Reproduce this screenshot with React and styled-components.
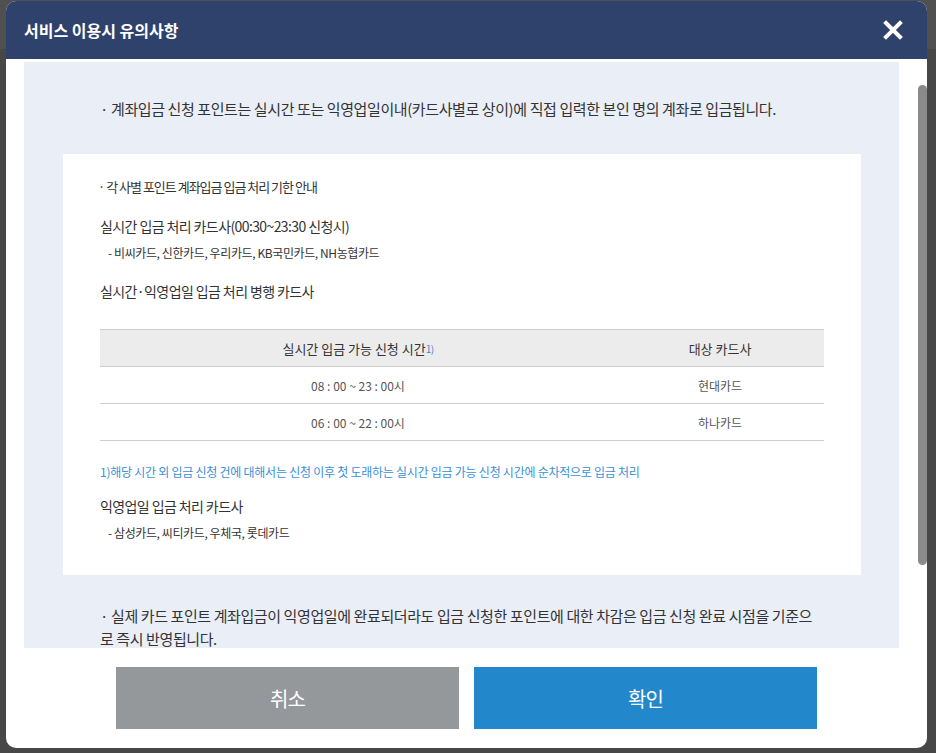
import React from 'react';
import styled, { createGlobalStyle } from 'styled-components';

const GlobalStyle = createGlobalStyle`
  html,
  body {
    margin: 0;
    padding: 0;
  }
  body {
    height: 753px;
    overflow: hidden;
    background: linear-gradient(#505050 0, #505050 49px, #474747 49px);
    font-family: 'Noto Sans CJK KR', 'Noto Sans', sans-serif;
    color: #333;
  }
`;

const StyledModal = styled.div`
  display: flex;
  flex-direction: column;
  width: 921px;
  height: 747px;
  margin: 1px 0 0 6px;
  border-radius: 10px;
  overflow: hidden;
  background: #fff;
`;

const StyledHeader = styled.header`
  display: flex;
  align-items: center;
  justify-content: space-between;
  flex-shrink: 0;
  height: 58px;
  padding: 0 24px 0 18px;
  background: #2e426b;

  h1 {
    margin: 0;
    color: #fff;
    font-size: 16px;
    font-weight: 700;
  }
`;

const StyledClose = styled.button`
  display: flex;
  padding: 0;
  border: 0;
  background: transparent;
  cursor: pointer;
`;

const StyledBody = styled.div`
  display: flex;
  gap: 19px;
  flex-shrink: 0;
  height: 586px;
  margin-top: 3px;
  padding-left: 18px;
`;

const StyledViewport = styled.div`
  width: 875px;
  height: 100%;
  overflow: hidden;
`;

const StyledTrack = styled.div`
  width: 9px;
  padding-top: 23px;
`;

const StyledThumb = styled.div`
  height: 480px;
  border-radius: 5px;
  background: #8a8a8a;
`;

const StyledContent = styled.div`
  padding: 35px 0 100px;
  background: #eaeef7;
`;

const StyledNotice = styled.p`
  margin: ${({ gap }) => gap || 0} 0 0;
  padding: 0 83px 0 76px;
  font-size: 15px;
  line-height: 23px;
  letter-spacing: -0.4px;
  word-break: break-all;
`;

const StyledBox = styled.div`
  margin: 34px 38px 0 39px;
  padding: 23px 37px 33px;
  background: #fff;
`;

const StyledBoxTitle = styled.p`
  margin: 0 0 0 -2px;
  font-size: 13px;
  line-height: 20px;
  letter-spacing: -1px;
`;

const StyledLabel = styled.p`
  margin: ${({ gap }) => gap}px 0 0;
  font-size: 14px;
  line-height: 20px;
  letter-spacing: -0.6px;
`;

const StyledSub = styled.p`
  margin: 8px 0 0;
  padding-left: 8px;
  font-size: 12px;
  line-height: 18px;
  letter-spacing: -0.4px;
`;

const StyledTable = styled.table`
  width: 100%;
  margin-top: 28px;
  border-collapse: collapse;
  border-top: 1px solid #cdcdcd;

  th,
  td {
    height: 36px;
    padding: 0;
    border-bottom: 1px solid #cdcdcd;
    text-align: center;
    vertical-align: middle;
  }
  th {
    background: #ececec;
    color: #333;
    font-size: 13px;
    font-weight: 400;
  }
  td {
    color: #555;
    font-size: 12px;
  }
  th:first-child {
    width: 516px;
  }

  sup {
    color: #4a84d0;
    font-size: 10px;
    vertical-align: 1px;
    letter-spacing: -0.5px;
  }
`;

const StyledFootnote = styled.p`
  margin: 22px 0 0;
  color: #3b8fd9;
  font-size: 12px;
  line-height: 18px;
  letter-spacing: -0.25px;
`;

const StyledFooter = styled.div`
  display: flex;
  justify-content: center;
  gap: 15px;
  padding-top: 19px;
`;

const StyledButton = styled.button`
  width: 343px;
  height: 62px;
  border: 0;
  background: ${({ primary }) => (primary ? '#2288cb' : '#94989b')};
  color: #fff;
  font-family: inherit;
  font-size: 20px;
  letter-spacing: -1px;
  cursor: pointer;
`;

const rows = [
  { time: '08 : 00 ~ 23 : 00시', card: '현대카드' },
  { time: '06 : 00 ~ 22 : 00시', card: '하나카드' },
];

const App = () => (
  <>
    <GlobalStyle />
    <StyledModal role="dialog" aria-labelledby="modal-title">
      <StyledHeader>
        <h1 id="modal-title">서비스 이용시 유의사항</h1>
        <StyledClose aria-label="닫기">
          <svg width="20" height="20" viewBox="0 0 20 20">
            <path d="M3 3L17 17M17 3L3 17" stroke="#fff" strokeWidth="4" strokeLinecap="square" />
          </svg>
        </StyledClose>
      </StyledHeader>

      <StyledBody>
        <StyledViewport>
          <StyledContent>
            <StyledNotice>
              · 계좌입금 신청 포인트는 실시간 또는 익영업일이내(카드사별로 상이)에 직접 입력한 본인 명의 계좌로 입금됩니다.
            </StyledNotice>

            <StyledBox>
              <StyledBoxTitle>· 각 사별 포인트 계좌입금 입금 처리 기한 안내</StyledBoxTitle>
              <StyledLabel gap={19}>실시간 입금 처리 카드사(00:30~23:30 신청시)</StyledLabel>
              <StyledSub>- 비씨카드, 신한카드, 우리카드, KB국민카드, NH농협카드</StyledSub>
              <StyledLabel gap={19}>실시간·익영업일 입금 처리 병행 카드사</StyledLabel>

              <StyledTable>
                <thead>
                  <tr>
                    <th>
                      실시간 입금 가능 신청 시간<sup>1)</sup>
                    </th>
                    <th>대상 카드사</th>
                  </tr>
                </thead>
                <tbody>
                  {rows.map((row, i) => (
                    <tr key={i}>
                      <td>{row.time}</td>
                      <td>{row.card}</td>
                    </tr>
                  ))}
                </tbody>
              </StyledTable>

              <StyledFootnote>
                1)해당 시간 외 입금 신청 건에 대해서는 신청 이후 첫 도래하는 실시간 입금 가능 신청 시간에 순차적으로 입금 처리
              </StyledFootnote>
              <StyledLabel gap={15}>익영업일 입금 처리 카드사</StyledLabel>
              <StyledSub>- 삼성카드, 씨티카드, 우체국, 롯데카드</StyledSub>
            </StyledBox>

            <StyledNotice gap="29px">
              · 실제 카드 포인트 계좌입금이 익영업일에 완료되더라도 입금 신청한 포인트에 대한 차감은 입금 신청 완료 시점을 기준으로 즉시 반영됩니다.
            </StyledNotice>
          </StyledContent>
        </StyledViewport>
        <StyledTrack>
          <StyledThumb />
        </StyledTrack>
      </StyledBody>

      <StyledFooter>
        <StyledButton>취소</StyledButton>
        <StyledButton primary>확인</StyledButton>
      </StyledFooter>
    </StyledModal>
  </>
);

export default App;
